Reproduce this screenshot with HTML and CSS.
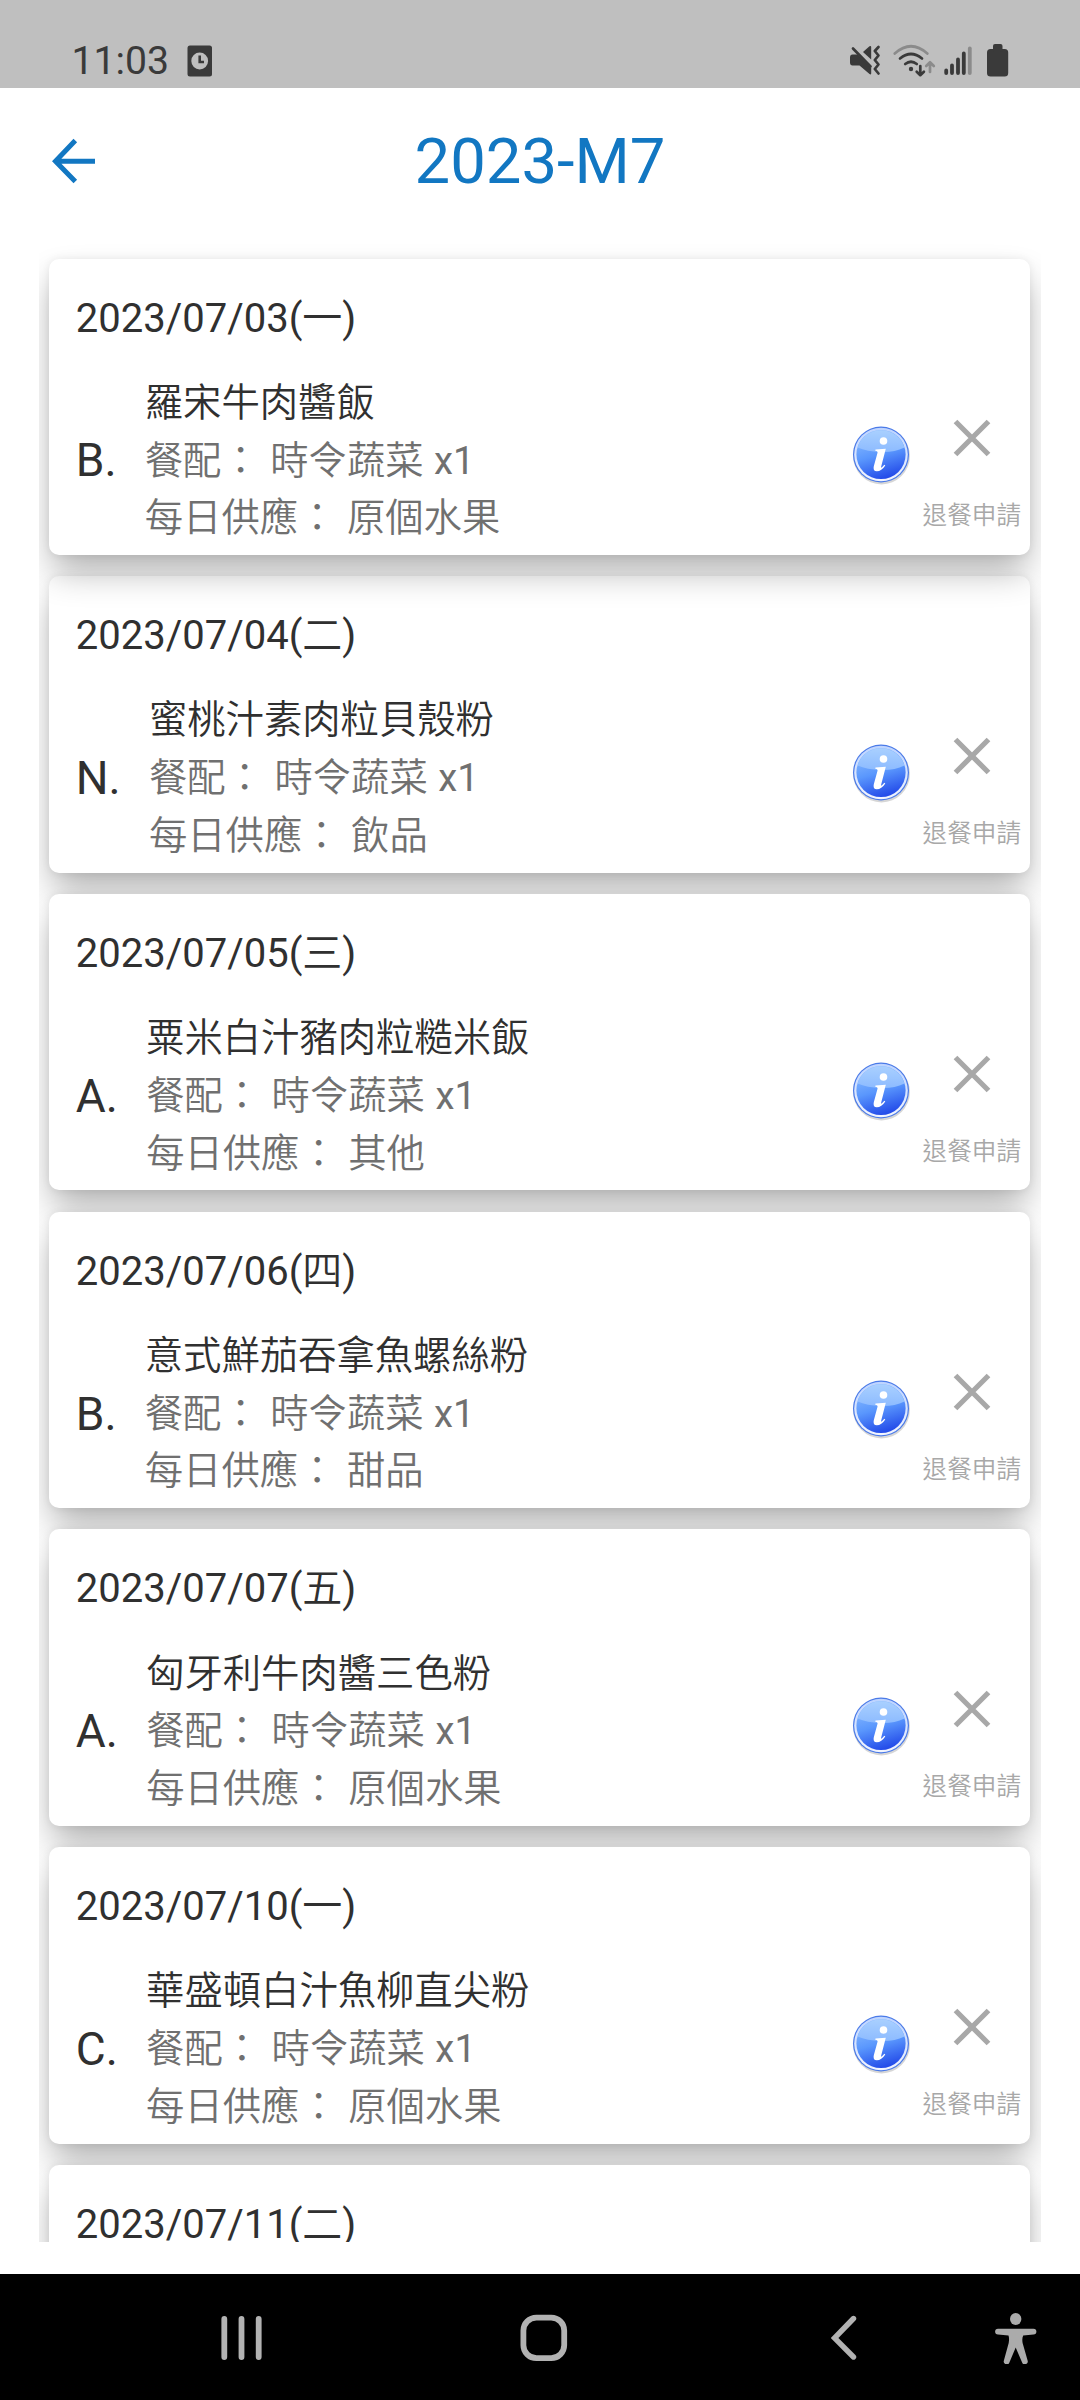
FILE: index.html
```html
<!DOCTYPE html>
<html lang="zh-Hant">
<head>
<meta charset="utf-8">
<title>2023-M7</title>
<link rel="stylesheet" href="styles.css">
</head>
<body>
<svg width="0" height="0" class="defs">
  <defs>
    <linearGradient id="ball" x1="0.3" y1="0" x2="0.6" y2="1">
      <stop offset="0" stop-color="#8fbfff"/><stop offset=".5" stop-color="#5a97fd"/><stop offset="1" stop-color="#2148e8"/>
    </linearGradient>
    <linearGradient id="gloss" x1="0" y1="0" x2="0" y2="1">
      <stop offset="0" stop-color="#a9d0ff"/><stop offset="1" stop-color="#8dbbff"/>
    </linearGradient>
    <linearGradient id="ring" x1="0" y1="0" x2="0" y2="1">
      <stop offset="0" stop-color="#bcd3ff"/><stop offset="1" stop-color="#f2f5ff"/>
    </linearGradient>
    <symbol id="info" viewBox="0 0 60 60">
      <circle cx="30.5" cy="31" r="28.4" fill="#000" opacity=".16"/>
      <circle cx="30" cy="29.5" r="28" fill="#4a7ae8"/>
      <circle cx="30" cy="29.5" r="26.8" fill="url(#ring)"/>
      <circle cx="30" cy="29.5" r="24.6" fill="url(#ball)"/>
      <path d="M6.5 22.500a24.600 24.600 0 0 1 47 0Q43 27.500 30 27Q16 26.500 6.500 22.500Z" fill="url(#gloss)"/>
      <circle cx="32.500" cy="16" r="3.800" fill="#fff"/>
      <path d="M24.500 24.600L34.800 23.800L30.200 41.500Q29.800 43.300 31 42.300L33.300 39.700L34.300 40.500Q30.500 46.300 25.800 46.300Q21.600 46 22.800 41.200L26.600 27.500Q26.600 25.600 24.200 25.800Z" fill="#fff"/>
    </symbol>
    <symbol id="cross" viewBox="0 0 40 40">
      <path d="M3.500 3.500L36.500 36.500M36.500 3.500L3.500 36.500" stroke="#a8a8a8" stroke-width="5.200"/>
    </symbol>
  </defs>
</svg>

<header class="status">
  <div class="status-left">
    <span class="clock">11:03</span>
    <svg width="26" height="32" viewBox="0 0 26 32"><rect x=".5" y=".5" width="24.500" height="31" rx="2.500" fill="#3a3a3a"/><circle cx="12.700" cy="16" r="8.400" fill="#bfbfbf"/><path d="M12.700 10.500V17H17" fill="none" stroke="#3a3a3a" stroke-width="2.600"/></svg>
  </div>
  <svg class="status-icons" width="160" height="36" viewBox="0 0 160 36">
    <g fill="#3a3a3a">
      <path d="M2.500 12.500H7.500L21.200 26V31.500Q21 33 19.500 32L9.500 23.500H2.500Q0 23.500 0 20.500V15.500Q0 12.500 2.500 12.500Z"/>
      <path d="M13 10L19.500 4.300Q21.200 3.500 21.200 5.500V17.500Z"/>
      <rect x="137" y="7" width="21.200" height="27.500" rx="3.500"/>
      <rect x="143" y="2" width="9.500" height="8" rx="2"/>
      <circle cx="61" cy="27" r="2.200"/>
    </g>
    <g fill="none" stroke="#3a3a3a" stroke-width="2.700" stroke-linecap="round" stroke-linejoin="round">
      <path d="M3 6.500L20.500 24.500"/>
      <path d="M28.500 5L24.800 9L28.500 13.500L24.800 18L28.500 22.500L24.800 27L28.500 31.500"/>
      <path d="M50 16.500Q61 7.500 72 16.500M55.200 22Q61 17.500 66.800 22"/>
      <path d="M70.300 24V33M66.700 29.800L70.300 33.200L73.900 29.800"/>
    </g>
    <g fill="none" stroke="#8b8b8b" stroke-width="2.700" stroke-linecap="round" stroke-linejoin="round">
      <path d="M44.800 11.500Q61 -3 77.300 11.500"/>
      <path d="M80 30V20.500M76.200 24L80 20.300L83.800 24"/>
    </g>
    <g fill="none" stroke="#3a3a3a" stroke-width="3.800" stroke-linecap="round">
      <path d="M96.200 28.500V31M102 23.500V31M108 17.500V31M113.800 11.500V31"/>
      <path d="M119.800 6.500V31" stroke="#8b8b8b"/>
    </g>
  </svg>
</header>

<div class="appbar">
  <svg class="back" width="44" height="46" viewBox="0 0 44 46"><path d="M43 23.300H4M23.300 2.500L3.500 23.300L23.300 43.500" fill="none" stroke="#1277c2" stroke-width="5"/></svg>
  <h1>2023-M7</h1>
</div>

<main class="list">
  <article class="card first">
    <div class="date">2023/07/03(一)</div>
    <div class="meal"><span class="code">B.</span><div class="desc"><p class="name">羅宋牛肉醬飯</p><p>餐配： 時令蔬菜 x1</p><p>每日供應： 原個水果</p></div><svg class="info"><use href="#info"/></svg><div class="cancel"><svg><use href="#cross"/></svg><span>退餐申請</span></div></div>
  </article>
  <article class="card">
    <div class="date">2023/07/04(二)</div>
    <div class="meal"><span class="code">N.</span><div class="desc"><p class="name">蜜桃汁素肉粒貝殼粉</p><p>餐配： 時令蔬菜 x1</p><p>每日供應： 飲品</p></div><svg class="info"><use href="#info"/></svg><div class="cancel"><svg><use href="#cross"/></svg><span>退餐申請</span></div></div>
  </article>
  <article class="card">
    <div class="date">2023/07/05(三)</div>
    <div class="meal"><span class="code">A.</span><div class="desc"><p class="name">粟米白汁豬肉粒糙米飯</p><p>餐配： 時令蔬菜 x1</p><p>每日供應： 其他</p></div><svg class="info"><use href="#info"/></svg><div class="cancel"><svg><use href="#cross"/></svg><span>退餐申請</span></div></div>
  </article>
  <article class="card">
    <div class="date">2023/07/06(四)</div>
    <div class="meal"><span class="code">B.</span><div class="desc"><p class="name">意式鮮茄吞拿魚螺絲粉</p><p>餐配： 時令蔬菜 x1</p><p>每日供應： 甜品</p></div><svg class="info"><use href="#info"/></svg><div class="cancel"><svg><use href="#cross"/></svg><span>退餐申請</span></div></div>
  </article>
  <article class="card">
    <div class="date">2023/07/07(五)</div>
    <div class="meal"><span class="code">A.</span><div class="desc"><p class="name">匈牙利牛肉醬三色粉</p><p>餐配： 時令蔬菜 x1</p><p>每日供應： 原個水果</p></div><svg class="info"><use href="#info"/></svg><div class="cancel"><svg><use href="#cross"/></svg><span>退餐申請</span></div></div>
  </article>
  <article class="card">
    <div class="date">2023/07/10(一)</div>
    <div class="meal"><span class="code">C.</span><div class="desc"><p class="name">華盛頓白汁魚柳直尖粉</p><p>餐配： 時令蔬菜 x1</p><p>每日供應： 原個水果</p></div><svg class="info"><use href="#info"/></svg><div class="cancel"><svg><use href="#cross"/></svg><span>退餐申請</span></div></div>
  </article>
  <article class="card">
    <div class="date">2023/07/11(二)</div>
  </article>
</main>

<nav class="navbar">
  <svg width="42" height="46" viewBox="0 0 42 46"><path d="M3.300 4V42M20.500 4V42M37.700 4V42" stroke="#b2b2b2" stroke-width="5.800" stroke-linecap="round"/></svg>
  <svg width="48" height="48" viewBox="0 0 48 48"><rect x="3.400" y="3.600" width="40.800" height="40.600" rx="13" fill="none" stroke="#b2b2b2" stroke-width="5.800"/></svg>
  <svg width="26" height="46" viewBox="0 0 26 46"><path d="M22.500 3.500L3.500 23L22.500 42" fill="none" stroke="#b2b2b2" stroke-width="5.400" stroke-linecap="round"/></svg>
  <svg width="42" height="52" viewBox="0 0 42 52"><g fill="#ababab"><ellipse cx="20.700" cy="7" rx="5.700" ry="6"/><path d="M3 16.700H38.500A2.800 2.800 0 0 1 38.500 22.500L28.200 23.400Q26.800 26 27.600 31L32.600 48.500A2.900 2.900 0 0 1 27 50.300L20.700 35.500L14.500 50.300A2.900 2.900 0 0 1 8.900 48.500L13.700 31Q14.500 26 13.500 23.400L3 22.500A2.800 2.800 0 0 1 3 16.700Z"/></g></svg>
</nav>
</body>
</html>
```
FILE: styles.css
```css
* { box-sizing: border-box; margin: 0; padding: 0; }
body {
  width: 1080px;
  height: 2400px;
  display: flex;
  flex-direction: column;
  overflow: hidden;
  background: #fff;
  color: #303030;
  font-family: Roboto, "Noto Sans CJK TC DemiLight", "Noto Sans CJK TC", sans-serif;
}
svg { display: block; flex: none; }
.defs { position: absolute; }

.status {
  height: 88px;
  flex: none;
  background: #bfbfbf;
  color: #3a3a3a;
  display: flex;
  justify-content: space-between;
  padding: 42px 70px 0 71.500px;
}
.status-left { display: flex; gap: 18px; padding-top: 2.500px; }
.clock { font-size: 39.200px; line-height: 32px; }

.appbar {
  height: 146px;
  flex: none;
  padding: 0 52px;
  display: grid;
  grid-template-columns: 44px 1fr 44px;
  align-items: center;
}
.appbar h1 {
  text-align: center;
  font-size: 63.400px;
  font-weight: 400;
  color: #1277c2;
  line-height: 74px;
}

.list {
  height: 2008px;
  flex: none;
  margin: 0 39px 32px;
  padding: 24.600px 11.200px 0 10.300px;
  display: flex;
  flex-direction: column;
  gap: 21.200px;
  overflow: hidden;
}
.card {
  height: 296.500px;
  flex: none;
  padding: 30px 0 0 26.500px;
  border-radius: 10px;
  background: #fff;
  box-shadow: 0 19px 35px -3px rgba(0, 0, 0, .31), 0 0 8px rgba(0, 0, 0, .07);
}
.card.first { position: relative; }
.date { font-size: 40px; line-height: 60px; }
.meal {
  margin-top: 25.200px;
  height: 173.400px;
  display: flex;
  align-items: center;
}
.code { font-size: 46px; line-height: 58px; margin-right: 28.200px; }
.desc { flex: 1; color: #707070; font-size: 38.350px; line-height: 57.800px; word-spacing: 1px; }
.desc .name { color: #303030; }
.info { width: 60px; height: 60px; margin: 0 11px 10px 0; }
.cancel {
  display: flex;
  flex-direction: column;
  align-items: center;
  width: 99px;
  margin-right: 8.500px;
  padding-top: 32px;
  gap: 40px;
  font-size: 24.600px;
  line-height: 36px;
  color: #a8a8a8;
  white-space: nowrap;
}
.cancel svg { width: 40px; height: 40px; }

.navbar {
  flex: 1;
  background: #000;
  display: grid;
  grid-template-columns: 299px 311px 164px 42px;
  align-items: center;
  padding: 2px 0 0 220.500px;
}
```
